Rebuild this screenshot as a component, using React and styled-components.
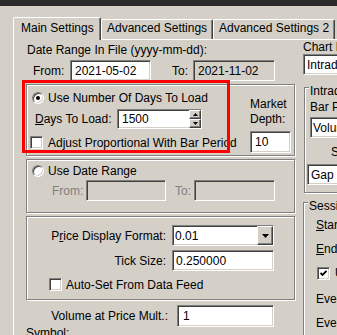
import React from 'react';
import styled, { createGlobalStyle } from 'styled-components';

const GlobalStyle = createGlobalStyle`
  html, body {
    margin: 0;
    padding: 0;
    background: #d4d0c8;
    overflow: hidden;
  }
  body {
    font-family: "Liberation Sans", Arial, sans-serif;
    font-size: 12px;
    color: #000;
  }
`;

const Window = styled.div`
  width: 337px;
  height: 335px;
  overflow: hidden;
  background: #d4d0c8;
`;

const TopBar = styled.div`
  height: 6px;
  background: #2b2b2b;
`;

const TabStrip = styled.div`
  display: flex;
  align-items: flex-end;
  height: 33px;
  padding-left: 13px;
`;

const Tab = styled.div`
  position: relative;
  z-index: ${p => (p.$active ? 1 : 0)};
  flex: none;
  box-sizing: border-box;
  width: ${p => p.$w}px;
  height: ${p => (p.$active ? 23 : 20)}px;
  margin-bottom: ${p => (p.$active ? -1 : 0)}px;
  padding: ${p => (p.$active ? '3px 0 0 7px' : '1px 0 0 5px')};
  background: #d4d0c8;
  border-top: 1px solid #fff;
  border-left: 1px solid #fff;
  border-right: 1px solid #404040;
  border-radius: 2px 2px 0 0;
  box-shadow: inset -1px 0 0 #808080;
  line-height: 15px;
  white-space: nowrap;
`;

const Panel = styled.div`
  display: flex;
  gap: 8px;
  height: 300px;
  margin-left: 13px;
  padding-left: 12px;
  border-top: 1px solid #fff;
  border-left: 1px solid #fff;
`;

const LeftCol = styled.div`
  flex: none;
  width: 269px;
  display: flex;
  flex-direction: column;
`;

const RightCol = styled.div`
  flex: none;
  width: 160px;
  display: flex;
  flex-direction: column;
`;

const Caption = styled.div`
  height: 22px;
  display: flex;
  align-items: center;
  padding-left: ${p => p.$indent ?? 1}px;
  white-space: nowrap;
`;

const FieldRow = styled.div`
  display: flex;
  align-items: center;
  height: ${p => p.$h ?? 21}px;
  margin-top: ${p => p.$mt ?? 0}px;
  padding-left: ${p => p.$indent ?? 0}px;
`;

const Label = styled.span`
  flex: none;
  box-sizing: border-box;
  width: ${p => p.$w}px;
  margin-left: ${p => p.$gap ?? 0}px;
  text-align: ${p => (p.$right ? 'right' : 'left')};
  color: ${p => (p.$dim ? '#808080' : '#000')};
  white-space: nowrap;
`;

const Field = styled.div`
  flex: none;
  box-sizing: border-box;
  display: flex;
  align-items: center;
  width: ${p => p.$w}px;
  height: ${p => p.$h ?? 21}px;
  margin-top: ${p => p.$mt ?? 0}px;
  margin-left: ${p => p.$ml ?? 0}px;
  padding-left: ${p => p.$pad ?? 4}px;
  background: ${p => (p.$disabled ? '#d4d0c8' : '#fff')};
  border: 1px solid;
  border-color: #808080 #fff #fff #808080;
  box-shadow: inset 1px 1px 0 #404040, inset -1px -1px 0 #d4d0c8;
  white-space: nowrap;
  overflow: hidden;
`;

const FieldText = styled.span`
  flex: 1;
`;

const Spinner = styled.div`
  flex: none;
  align-self: stretch;
  width: 12px;
  display: flex;
  flex-direction: column;
`;

const RaisedButton = styled.div`
  box-sizing: border-box;
  flex: ${p => (p.$grow ? 1 : 'none')};
  width: ${p => (p.$w ? `${p.$w}px` : 'auto')};
  align-self: stretch;
  display: flex;
  align-items: center;
  justify-content: center;
  background: #d4d0c8;
  border: 1px solid;
  border-color: #fff #404040 #404040 #fff;
  box-shadow: inset -1px -1px 0 #808080;
`;

const Group = styled.div`
  position: relative;
  flex: none;
  box-sizing: border-box;
  height: ${p => p.$h}px;
  margin-top: ${p => p.$mt ?? 0}px;
  margin-left: ${p => p.$ml ?? 0}px;
  padding: ${p => p.$pad ?? '0'};
  border: 1px solid #808080;
  box-shadow: inset 1px 1px 0 #fff, 1px 1px 0 #fff;
  display: flex;
  flex-direction: ${p => (p.$row ? 'row' : 'column')};
`;

const Legend = styled.span`
  position: absolute;
  left: ${p => p.$left ?? 3}px;
  top: -4px;
  padding: 0 1px;
  background: #d4d0c8;
  line-height: 15px;
  white-space: nowrap;
`;

const Highlight = styled.div`
  position: absolute;
  left: -5px;
  top: -5px;
  width: 208px;
  height: 73px;
  box-sizing: border-box;
  border: 3px solid #ff0000;
  pointer-events: none;
`;

const OptionCol = styled.div`
  flex: none;
  width: 223px;
  box-sizing: border-box;
  padding: ${p => p.$pad ?? '5px 0 0 5px'};
  display: flex;
  flex-direction: column;
`;

const DepthCol = styled.div`
  flex: none;
  width: 41px;
  padding-top: 12px;
  display: flex;
  flex-direction: column;
  line-height: 15px;
`;

const Option = styled.label`
  display: flex;
  align-items: center;
  gap: ${p => p.$gap ?? 4}px;
  height: ${p => p.$h ?? 16}px;
  margin-top: ${p => p.$mt ?? 0}px;
  margin-left: ${p => p.$ml ?? 0}px;
  white-space: nowrap;
`;

const RadioDot = styled.span`
  position: relative;
  flex: none;
  box-sizing: border-box;
  width: 12px;
  height: 12px;
  border-radius: 50%;
  background: #fff;
  border: 1px solid;
  border-color: #808080 #fff #fff #808080;
  box-shadow: inset 1px 1px 0 #404040, inset -1px -1px 0 #d4d0c8;
  &::after {
    content: '';
    display: ${p => (p.$checked ? 'block' : 'none')};
    position: absolute;
    left: 3px;
    top: 3px;
    width: 4px;
    height: 4px;
    border-radius: 50%;
    background: #000;
  }
`;

const CheckBox = styled.span`
  flex: none;
  box-sizing: border-box;
  width: 13px;
  height: 13px;
  margin-left: ${p => p.$ml ?? 0}px;
  display: flex;
  align-items: center;
  justify-content: center;
  background: #fff;
  border: 1px solid;
  border-color: #808080 #fff #fff #808080;
  box-shadow: inset 1px 1px 0 #404040, inset -1px -1px 0 #d4d0c8;
`;

const FormRow = styled.div`
  display: flex;
  align-items: center;
  height: ${p => p.$h ?? 21}px;
  margin-top: ${p => p.$mt ?? 0}px;
  gap: ${p => p.$gap ?? 6}px;
`;

const TextLine = styled.div`
  height: ${p => p.$h ?? 15}px;
  display: flex;
  align-items: center;
  margin-top: ${p => p.$mt ?? 0}px;
  padding-left: ${p => p.$indent ?? 0}px;
  white-space: nowrap;
`;

const SessionRow = styled.div`
  height: 24px;
  display: flex;
  align-items: center;
  gap: 5px;
  margin-top: ${p => p.$mt ?? 0}px;
  white-space: nowrap;
`;

const Check = () => (
  <svg width="7" height="7" viewBox="0 0 7 7">
    <polyline points="0.5,3 2.5,5 6.5,1" fill="none" stroke="#000" strokeWidth="1.8" />
  </svg>
);

const Arrow = ({ up }) => (
  <svg width="7" height="4" viewBox="0 0 7 4">
    <polygon points={up ? '3.5,0 7,4 0,4' : '0,0 7,0 3.5,4'} fill="#000" />
  </svg>
);

const SmallArrow = ({ up }) => (
  <svg width="5" height="3" viewBox="0 0 5 3">
    <polygon points={up ? '2.5,0 5,3 0,3' : '0,0 5,0 2.5,3'} fill="#000" />
  </svg>
);

export default function App() {
  return (
    <>
      <GlobalStyle />
      <Window>
        <TopBar />
        <TabStrip>
          <Tab $active $w={88}>Main Settings</Tab>
          <Tab $w={112}>Advanced Settings</Tab>
          <Tab $w={122}>Advanced Settings 2</Tab>
        </TabStrip>
        <Panel>
          <LeftCol>
            <Caption>Date Range In File (yyyy-mm-dd):</Caption>
            <FieldRow $indent={7}>
              <Label $w={37}>From:</Label>
              <Field $w={81}>2021-05-02</Field>
              <Label $w={21} $gap={21}>To:</Label>
              <Field $w={82} $disabled>2021-11-02</Field>
            </FieldRow>

            <Group $h={72} $mt={3} $row>
              <Highlight />
              <OptionCol>
                <Option>
                  <RadioDot $checked />
                  Use Number Of Days To Load
                </Option>
                <FieldRow $h={20} $mt={3} $indent={3}>
                  <Label $w={82}><u>D</u>ays To Load:</Label>
                  <Field $w={85} $h={20} $pad={4}>
                    <FieldText>1500</FieldText>
                    <Spinner>
                      <RaisedButton $grow><SmallArrow up /></RaisedButton>
                      <RaisedButton $grow><SmallArrow /></RaisedButton>
                    </Spinner>
                  </Field>
                </FieldRow>
                <Option $h={13} $mt={7} $ml={-2} $gap={5}>
                  <CheckBox />
                  Adjust Proportional With Bar Period
                </Option>
              </OptionCol>
              <DepthCol>
                <span>Market</span>
                <span>Depth:</span>
                <Field $w={41} $h={22} $mt={4}>10</Field>
              </DepthCol>
            </Group>

            <Group $h={54} $mt={3}>
              <OptionCol $pad="3px 0 0 5px">
                <Option $h={15}>
                  <RadioDot />
                  Use Date Range
                </Option>
                <FieldRow $mt={2} $indent={20}>
                  <Label $w={34} $dim>From:</Label>
                  <Field $w={80} $disabled />
                  <Label $w={19} $gap={9} $dim>To:</Label>
                  <Field $w={81} $disabled />
                </FieldRow>
              </OptionCol>
            </Group>

            <Group $h={84} $mt={3} $pad="8px 0 0 0">
              <FormRow>
                <Label $w={139} $right>P<u>r</u>ice Display Format:</Label>
                <Field $w={102} $pad={2}>
                  <FieldText>0.01</FieldText>
                  <RaisedButton $w={16}><Arrow /></RaisedButton>
                </Field>
              </FormRow>
              <FormRow $mt={4}>
                <Label $w={139} $right>Tick Size:</Label>
                <Field $w={102} $pad={3}>0.250000</Field>
              </FormRow>
              <Option $h={13} $mt={7} $ml={22}>
                <CheckBox />
                Auto-Set From Data Feed
              </Option>
            </Group>

            <FormRow $h={22} $mt={5} $gap={9}>
              <Label $w={142} $right>Volume at Price Mult.:</Label>
              <Field $w={97} $h={22} $pad={5}>1</Field>
            </FormRow>
            <TextLine $mt={-1}>Symbol:</TextLine>
          </LeftCol>

          <RightCol>
            <Caption $indent={0}>Chart Data Type</Caption>
            <Field $w={160} $pad={3}>Intraday Chart</Field>

            <Group $h={106} $mt={12} $ml={1} $pad="11px 0 0 5px">
              <Legend $left={4}>Intraday Chart Bar Period</Legend>
              <TextLine>Bar Period Type</TextLine>
              <Field $w={150} $pad={2} $mt={3}>Volume Per Bar</Field>
              <TextLine $mt={6} $indent={21}>Settings</TextLine>
              <Field $w={150} $pad={3} $mt={5} $ml={-3}>Gap Fill Settings</Field>
            </Group>

            <Group $h={140} $mt={9} $pad="10px 0 0 12px">
              <Legend $left={4}>Session Times</Legend>
              <SessionRow><span><u>S</u>tart Time:</span></SessionRow>
              <SessionRow><span><u>E</u>nd Time:</span></SessionRow>
              <SessionRow>
                <CheckBox $ml={1}><Check /></CheckBox>
                Use Evening Session
              </SessionRow>
              <SessionRow $mt={2}><span>Evening Start:</span></SessionRow>
              <SessionRow><span>Evening End:</span></SessionRow>
            </Group>
          </RightCol>
        </Panel>
      </Window>
    </>
  );
}
